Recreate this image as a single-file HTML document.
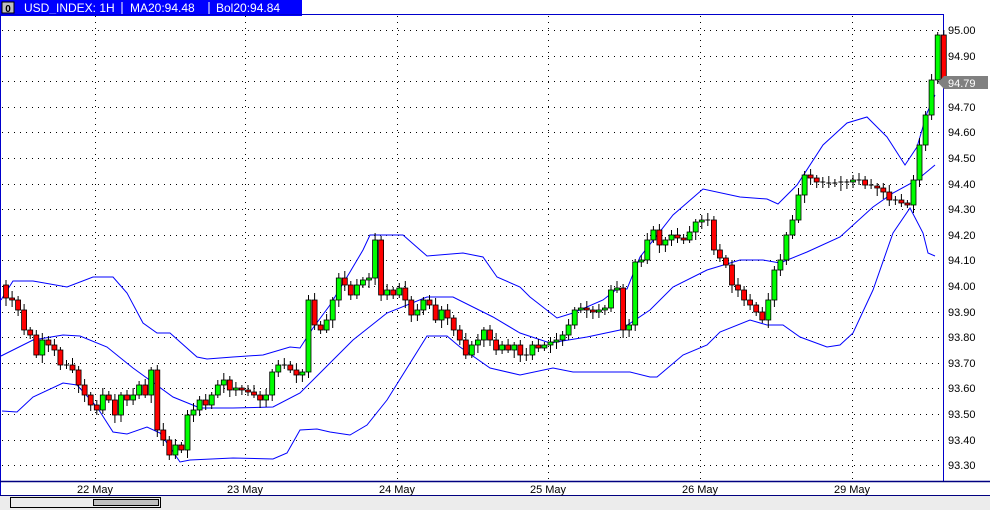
<!DOCTYPE html>
<html><head><style>
body{margin:0;width:990px;height:510px;overflow:hidden;background:#fff;font-family:"Liberation Sans",sans-serif}
</style></head><body>
<svg id="s" width="990" height="510" xmlns="http://www.w3.org/2000/svg" style="position:absolute;left:0;top:0">
<rect x="0" y="0" width="990" height="510" fill="#fff"/>
<rect x="0" y="0" width="302" height="16" fill="#0000ff"/>
<rect x="2" y="2" width="12" height="11" fill="#c0c0c0" stroke="#000" stroke-width="1"/>
<text x="8" y="12" font-size="10" text-anchor="middle" font-weight="bold" fill="#000">0</text>
<text x="24" y="12" font-size="12" fill="#fff">USD_INDEX: 1H</text>
<line x1="122" y1="2" x2="122" y2="14" stroke="#fff"/>
<text x="130" y="12" font-size="12" fill="#fff">MA20:94.48</text>
<line x1="209" y1="2" x2="209" y2="14" stroke="#fff"/>
<text x="216" y="12" font-size="12" fill="#fff">Bol20:94.84</text>
<line x1="0" y1="14.5" x2="943" y2="14.5" stroke="#0000cc"/>
<line x1="943.5" y1="14" x2="943.5" y2="482" stroke="#0000cc"/>
<line x1="0.5" y1="14" x2="0.5" y2="510" stroke="#0000cc"/>
<line x1="0" y1="481.5" x2="990" y2="481.5" stroke="#000080" stroke-width="1.5"/>
<rect x="0" y="495" width="990" height="15" fill="#ececec"/>
<line x1="0" y1="495.5" x2="990" y2="495.5" stroke="#000080"/>
<rect x="10.5" y="497.5" width="150" height="10" fill="#ececec" stroke="#000"/>
<rect x="93.5" y="499.5" width="65" height="6" fill="#c0c0c0" stroke="#000"/>
<g id="grid"></g>
<g id="bands" fill="none" stroke="#0000ff" stroke-width="1"></g>
<g id="candles"></g>
<rect x="944" y="76" width="44" height="13" fill="#808080"/>
<polygon points="944,76 938,82.5 944,89" fill="#808080"/>
<text x="948" y="87" font-size="11" fill="#fff">94.79</text>
</svg>
<script>
(function(){
var NS="http://www.w3.org/2000/svg";
function el(p,t,a,txt){var e=document.createElementNS(NS,t);for(var q in a)e.setAttribute(q,a[q]);if(txt)e.textContent=txt;p.appendChild(e);return e;}
var g=document.getElementById('grid');
for(var i=0;i<=17;i++){var y=30+i*25.6;var yy=Math.round(y)+0.5;
el(g,'line',{x1:2,y1:yy,x2:940,y2:yy,stroke:'#000','stroke-dasharray':'1 5'});
if(i!=2)el(g,'text',{x:948,y:Math.round(y)+4,'font-size':'11',fill:'#000'},(95-i*0.1).toFixed(2));}
var xs=[95,245,397,548,700,852],lb=['22 May','23 May','24 May','25 May','26 May','29 May'];
for(var j=0;j<6;j++){el(g,'line',{x1:xs[j]+0.5,y1:16,x2:xs[j]+0.5,y2:480,stroke:'#000','stroke-dasharray':'1 5'});
el(g,'text',{x:xs[j],y:493,'font-size':'11','text-anchor':'middle',fill:'#000'},lb[j]);}
var b=document.getElementById('bands');
function pl(a){el(b,'polyline',{points:a.map(function(p){return p.join(',')}).join(' ')});}
pl([[1,300],[13,281],[33,281],[67,287],[93,277],[113,277],[127,293],[143,323],[157,333],[170,333],[197,357],[207,359],[233,357],[263,355],[290,347],[300,348],[313,328],[330,305],[350,272],[363,250],[370,235],[403,235],[427,256],[463,253],[483,257],[497,277],[520,287],[530,297],[557,318],[573,313],[603,300],[617,289],[627,289],[640,257],[673,215],[703,189],[740,197],[767,199],[778,204],[797,185],[823,145],[847,123],[867,117],[887,137],[905,165],[917,147],[927,113],[935,95]]);
pl([[1,356],[33,340],[63,335],[80,336],[107,347],[133,368],[173,397],[200,408],[233,408],[273,407],[300,393],[320,373],[353,340],[387,313],[427,297],[453,297],[493,317],[520,333],[550,343],[587,337],[620,330],[650,310],[673,287],[707,270],[740,260],[763,260],[780,263],[807,252],[840,237],[873,207],[893,193],[917,180],[935,165]]);
pl([[2,411],[17,412],[33,397],[63,383],[77,385],[97,407],[113,432],[127,434],[147,427],[160,433],[180,462],[190,460],[233,458],[273,459],[287,453],[300,430],[317,429],[330,432],[350,435],[367,425],[387,400],[427,336],[447,336],[460,347],[490,368],[520,375],[553,368],[573,372],[600,372],[630,372],[650,377],[657,377],[683,355],[707,345],[720,332],[750,320],[767,325],[783,325],[800,337],[827,347],[840,345],[853,333],[873,290],[893,233],[910,208],[923,233],[928,253],[935,256]]);
var c=[285,298,300,310,330,335,355,340,345,350,365,365,370,385,395,405,410,395,400,415,395,400,395,385,395,370,430,440,455,445,450,415,410,400,405,395,385,380,390,388,390,392,395,400,395,372,365,365,370,375,372,300,325,330,320,300,278,285,295,285,280,278,240,295,290,295,288,300,315,310,300,305,320,310,318,330,340,355,345,340,330,340,350,345,350,345,355,355,345,348,345,342,340,335,325,310,308,310,312,310,308,290,288,330,325,262,260,240,230,245,240,235,238,240,232,222,220,220,250,258,265,285,290,300,305,312,320,300,270,260,235,220,195,175,178,182,183,184,183,182,182,180,180,185,186,188,192,200,200,203,205,180,145,115,80,35,82];
var cg=document.getElementById('candles');
for(var k=1;k<c.length;k++){var x=6+(k-1)*6.05;var o=c[k-1],cl=c[k];var t0=Math.min(o,cl),b0=Math.max(o,cl);
var w1=3+((k*7)%5),w2=3+((k*11)%6);
el(cg,'line',{x1:x.toFixed(1),y1:t0-w1,x2:x.toFixed(1),y2:b0+w2,stroke:'#000'});
if(b0-t0<1.5){el(cg,'line',{x1:x-2.5,y1:t0,x2:x+2.5,y2:t0,stroke:'#000'});}
else el(cg,'rect',{x:(x-2.5).toFixed(1),y:t0,width:5,height:b0-t0,fill:cl<o?'#00ff00':'#ff0000',stroke:'#000','stroke-width':'0.8'});}
})();
</script>
</body></html>
